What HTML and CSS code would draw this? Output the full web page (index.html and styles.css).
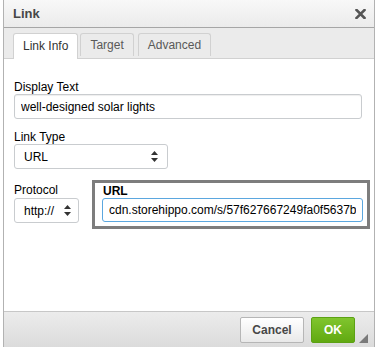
FILE: index.html
```html
<!DOCTYPE html>
<html lang="en">
<head>
    <meta charset="UTF-8">
    <title>Link</title>
    <link rel="stylesheet" href="styles.css">
</head>
<body>
    <div class="dialog">
        <div class="title-bar">
            <span class="title">Link</span>
            <svg class="close" width="11" height="10" viewBox="0 0 11 10">
                <path d="M1.5 1 L9.5 9 M9.5 1 L1.5 9" stroke="#555" stroke-width="2.6" stroke-linecap="square"/>
            </svg>
        </div>
        <div class="tabs">
            <span class="tab active">Link Info</span>
            <span class="tab">Target</span>
            <span class="tab">Advanced</span>
        </div>
        <div class="content">
            <div class="field">
                <label>Display Text</label>
                <input type="text" class="text-input" value="well-designed solar lights">
            </div>
            <div class="field">
                <label>Link Type</label>
                <div class="select type-select">
                    <span>URL</span>
                    <svg width="7" height="11" viewBox="0 0 7 11"><path d="M3.5 0 L7 4 H0 Z M0 7 H7 L3.5 11 Z" fill="#333"/></svg>
                </div>
            </div>
            <div class="url-row">
                <div class="field protocol">
                    <label>Protocol</label>
                    <div class="select protocol-select">
                        <span>http://</span>
                        <svg width="7" height="11" viewBox="0 0 7 11"><path d="M3.5 0 L7 4 H0 Z M0 7 H7 L3.5 11 Z" fill="#333"/></svg>
                    </div>
                </div>
                <div class="url-box">
                    <label class="bold">URL</label>
                    <input type="text" class="text-input url-input" value="cdn.storehippo.com/s/57f627667249fa0f5637b">
                </div>
            </div>
        </div>
        <div class="footer">
            <button class="btn cancel">Cancel</button>
            <button class="btn ok">OK</button>
            <svg class="grip" width="9" height="9" viewBox="0 0 9 9"><path d="M9 0 V9 H0 Z" fill="#7a7a7a"/></svg>
        </div>
    </div>
</body>
</html>
```

FILE: styles.css
```css
* {
    margin: 0;
    padding: 0;
    box-sizing: border-box;
}
body {
    font-family: 'Liberation Sans', Arial, sans-serif;
    background: #fff;
    color: #000;
    overflow: hidden;
    height: 347px;
}
.dialog {
    margin-left: 3px;
    width: 372px;
    border-left: 1px solid #b2b2b2;
    border-right: 1px solid #b2b2b2;
    background: #fff;
}
.title-bar {
    height: 28px;
    display: flex;
    align-items: center;
    justify-content: space-between;
    padding: 0 8px 0 9px;
    background: linear-gradient(#f8f8f8, #ebebeb);
    border-bottom: 1px solid #a6a6a6;
}
.title {
    font-size: 13px;
    font-weight: bold;
    color: #474747;
}
.close {
    margin-top: 1px;
}
.tabs {
    height: 31px;
    padding: 5px 0 0 9px;
    background: #ebebeb;
    border-bottom: 1px solid #d1d1d1;
    display: flex;
    align-items: flex-start;
}
.tab {
    height: 23px;
    padding: 0 9px;
    margin-right: 2px;
    font-size: 12px;
    line-height: 22px;
    color: #595959;
    background: #ebebeb;
    border: 1px solid #d1d1d1;
    border-bottom: none;
    border-radius: 3px 3px 0 0;
}
.tab.active {
    height: 26px;
    background: #fff;
    color: #333;
    padding: 0 9px;
    line-height: 24px;
}
.tab:nth-child(3) {
    margin-left: 2px;
}
.content {
    height: 252px;
    padding: 21px 11px 0 10px;
}
.field {
    margin-bottom: 11px;
}
label {
    display: block;
    font-size: 12px;
    line-height: 14px;
    color: #000;
}
label.bold {
    font-weight: bold;
    line-height: 13px;
    padding-left: 1px;
}
.text-input {
    display: block;
    width: 348px;
    height: 25px;
    padding: 0 6px;
    font-family: 'Liberation Sans', Arial, sans-serif;
    font-size: 12px;
    color: #000;
    border: 1px solid #c9cccf;
    border-radius: 3px;
    box-shadow: inset 0 1px 1px #eee;
    outline: none;
}
.select {
    display: flex;
    align-items: center;
    justify-content: space-between;
    height: 25px;
    padding: 0 9px;
    font-size: 12px;
    border: 1px solid #c9cccf;
    border-radius: 3px;
    background: #fff;
}
.type-select {
    width: 154px;
}
.protocol-select {
    width: 65px;
    padding-right: 7px;
}
.url-row {
    display: flex;
    align-items: flex-start;
    margin-top: 3px;
}
.protocol {
    margin-top: 3px;
}
.protocol label {
    margin-bottom: 1px;
}
.url-box {
    margin-left: 13px;
    width: 278px;
    border: 3px solid #7d7d7d;
    padding: 2px 4px 4px 7px;
}
.url-input {
    width: 261px;
    height: 24px;
    border-color: #5ba7df;
    box-shadow: none;
}
.footer {
    position: relative;
    height: 60px;
    border-top: 1px solid #c7c7c7;
    background: linear-gradient(#ececec, #d9d9d9 40px);
    display: flex;
    justify-content: flex-end;
    align-items: flex-start;
    padding: 5px 19px 0 0;
}
.btn {
    height: 26px;
    font-family: 'Liberation Sans', Arial, sans-serif;
    font-size: 12px;
    font-weight: bold;
    border-radius: 2px;
    cursor: pointer;
}
.cancel {
    width: 64px;
    color: #474747;
    background: linear-gradient(#fff, #e9e9e9);
    border: 1px solid #b6b6b6;
    margin-right: 7px;
}
.ok {
    width: 44px;
    color: #fff;
    background: linear-gradient(#80c52e, #61a911);
    border: 1px solid #5ca114;
}
.grip {
    position: absolute;
    left: 355px;
    top: 22px;
}
```
